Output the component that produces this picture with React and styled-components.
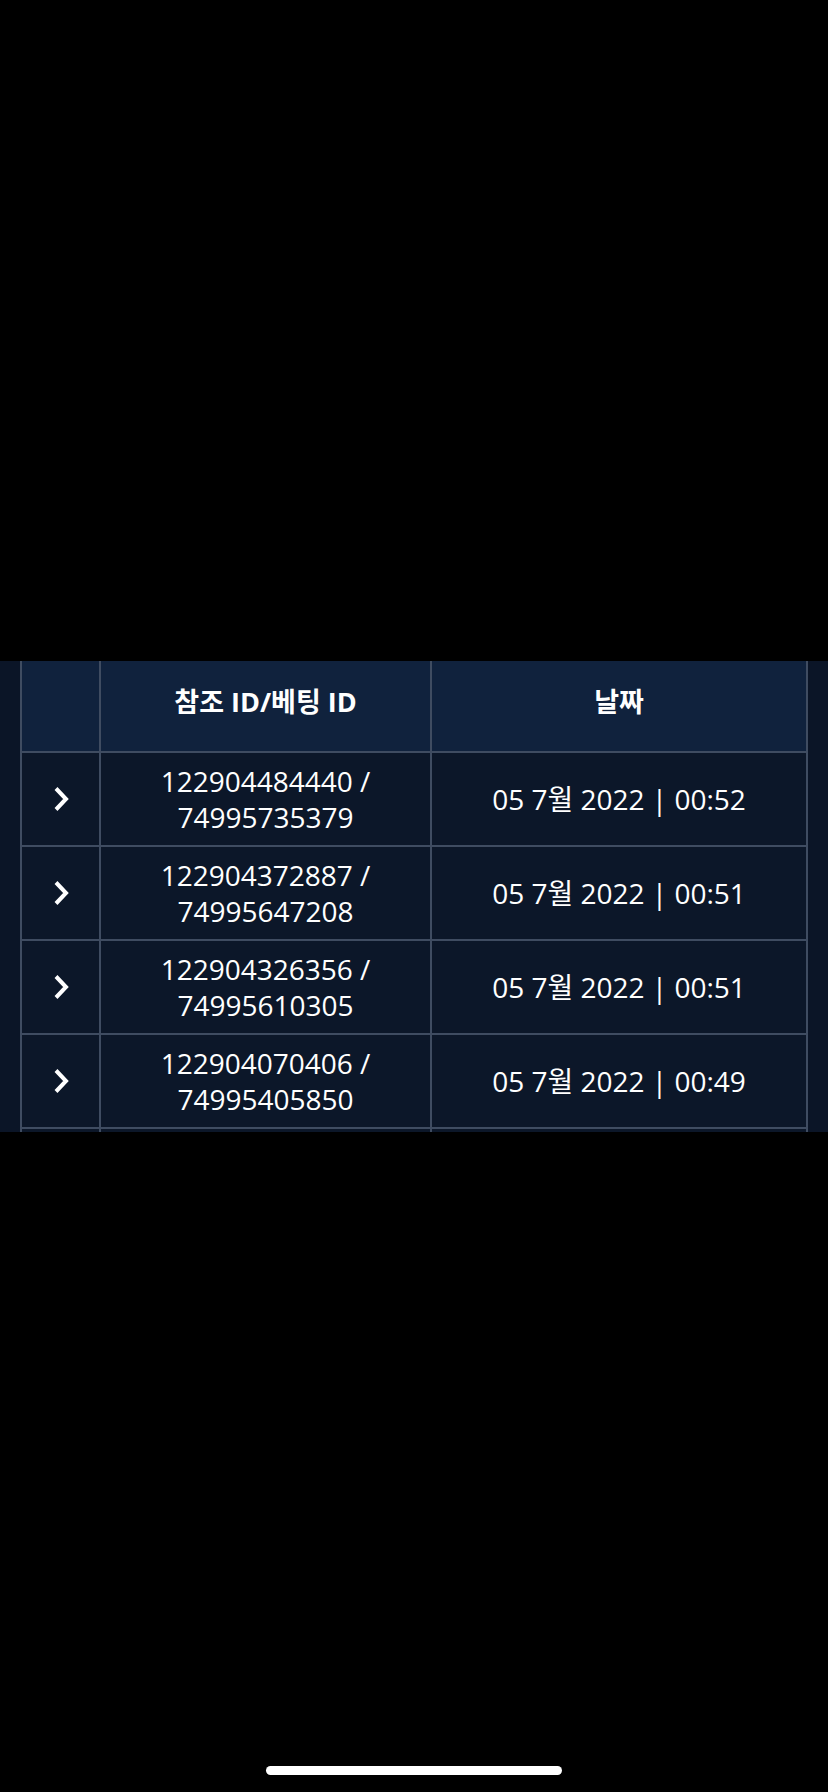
import styled, { createGlobalStyle } from 'styled-components';

const GlobalStyle = createGlobalStyle`
  body {
    margin: 0;
    background: #000;
    font-family: "Open Sans", "Noto Sans CJK KR", sans-serif;
  }
`;

const Screen = styled.div`
  display: flex;
  flex-direction: column;
  width: 828px;
  height: 1792px;
  background: #000;
`;

const TopSpace = styled.div`
  height: 661px;
`;

const Panel = styled.div`
  height: 471px;
  overflow: hidden;
  background: #0b1527;
  padding: 0 20px;
`;

const Grid = styled.div`
  display: grid;
  grid-template-columns: 79px 331px 374px;
  border-left: 2px solid #3f4c61;
  border-right: 2px solid #3f4c61;
`;

const Cell = styled.div`
  box-sizing: border-box;
  height: ${(p) => (p.head ? '92px' : '94px')};
  display: flex;
  align-items: center;
  justify-content: center;
  text-align: center;
  background: ${(p) => (p.head ? '#10223d' : '#0c1729')};
  border-bottom: 2px solid #3f4c61;
  border-right: ${(p) => (p.last ? 'none' : '2px solid #3f4c61')};
  color: #fff;
  font-size: ${(p) => (p.head ? '27px' : '28px')};
  font-weight: ${(p) => (p.head ? 700 : 400)};
  line-height: 36px;
  padding-bottom: ${(p) => (p.head ? '8px' : '0')};
`;

const Spacer = styled.div`
  flex: 1;
`;

const HomeBar = styled.div`
  align-self: center;
  width: 296px;
  height: 9px;
  border-radius: 5px;
  background: #fff;
  margin-bottom: 17px;
`;

const Chevron = () => (
  <svg width="18" height="26" viewBox="0 0 18 26">
    <path d="M4 2.5 L14 13 L4 23.5" fill="none" stroke="#fff" strokeWidth="4" />
  </svg>
);

const rows = [
  ['122904484440', '74995735379', '05 7월 2022 | 00:52'],
  ['122904372887', '74995647208', '05 7월 2022 | 00:51'],
  ['122904326356', '74995610305', '05 7월 2022 | 00:51'],
  ['122904070406', '74995405850', '05 7월 2022 | 00:49'],
];

function App() {
  return (
    <Screen>
      <GlobalStyle />
      <TopSpace />
      <Panel>
        <Grid>
          <Cell head />
          <Cell head>참조 ID/베팅 ID</Cell>
          <Cell head last>날짜</Cell>
          {rows.map((r, i) => [
            <Cell key={`a${i}`}><Chevron /></Cell>,
            <Cell key={`b${i}`}>{r[0]} /<br />{r[1]}</Cell>,
            <Cell key={`c${i}`} last>{r[2]}</Cell>,
          ])}
          <Cell />
          <Cell />
          <Cell last />
        </Grid>
      </Panel>
      <Spacer />
      <HomeBar />
    </Screen>
  );
}

export default App;
